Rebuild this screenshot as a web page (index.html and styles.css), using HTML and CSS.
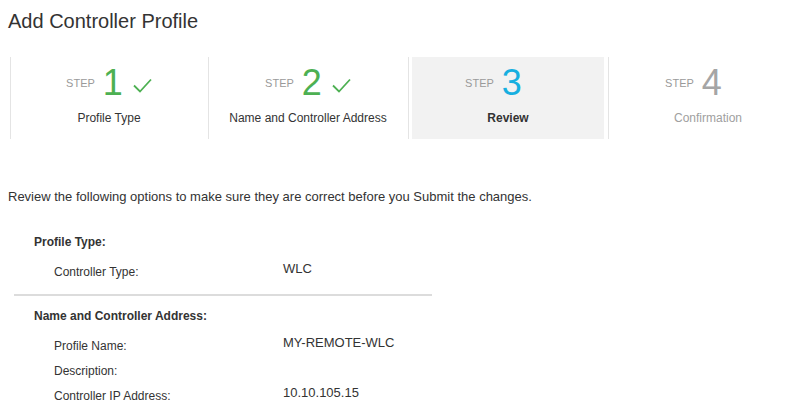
FILE: index.html
```html
<!DOCTYPE html>
<html lang="en">
<head>
  <meta charset="UTF-8">
  <meta name="viewport" content="width=device-width, initial-scale=1.0">
  <title>Add Controller Profile</title>
  <link rel="stylesheet" href="styles.css">
</head>
<body>
  <h1 class="page-title">Add Controller Profile</h1>

  <div class="steps">
    <div class="step done">
      <div class="step-inner">
        <div class="step-head">
          <span class="step-word">STEP</span>
          <span class="step-num">1</span>
          <svg class="check" width="19" height="15" viewBox="0 0 19 15"><polyline points="1,7.5 7,13.5 18,1.5" /></svg>
        </div>
        <div class="step-label">Profile Type</div>
      </div>
    </div>
    <div class="step done">
      <div class="step-inner">
        <div class="step-head">
          <span class="step-word">STEP</span>
          <span class="step-num">2</span>
          <svg class="check" width="19" height="15" viewBox="0 0 19 15"><polyline points="1,7.5 7,13.5 18,1.5" /></svg>
        </div>
        <div class="step-label">Name and Controller Address</div>
      </div>
    </div>
    <div class="step active">
      <div class="step-inner">
        <div class="step-head">
          <span class="step-word">STEP</span>
          <span class="step-num">3</span>
          <svg class="check" width="19" height="15" viewBox="0 0 19 15"><polyline points="1,7.5 7,13.5 18,1.5" /></svg>
        </div>
        <div class="step-label">Review</div>
      </div>
    </div>
    <div class="step pending">
      <div class="step-inner">
        <div class="step-head">
          <span class="step-word">STEP</span>
          <span class="step-num">4</span>
          <svg class="check" width="19" height="15" viewBox="0 0 19 15"><polyline points="1,7.5 7,13.5 18,1.5" /></svg>
        </div>
        <div class="step-label">Confirmation</div>
      </div>
    </div>
  </div>

  <p class="intro">Review the following options to make sure they are correct before you Submit the changes.</p>

  <div class="review">
    <div class="section">
      <h3 class="section-title">Profile Type:</h3>
      <div class="row">
        <span class="row-label">Controller Type:</span>
        <span class="row-value">WLC</span>
      </div>
    </div>
    <div class="section">
      <h3 class="section-title">Name and Controller Address:</h3>
      <div class="row">
        <span class="row-label">Profile Name:</span>
        <span class="row-value">MY-REMOTE-WLC</span>
      </div>
      <div class="row">
        <span class="row-label">Description:</span>
        <span class="row-value"></span>
      </div>
      <div class="row">
        <span class="row-label">Controller IP Address:</span>
        <span class="row-value">10.10.105.15</span>
      </div>
    </div>
  </div>
</body>
</html>
```

FILE: styles.css
```css
body { margin: 0; padding: 8px; font-family: "Liberation Sans", Arial, sans-serif; color: #333; background: #fff; overflow: hidden; }

.page-title { font-size: 20px; font-weight: normal; line-height: 23px; margin: 2px 0 24px; color: #333; }

/* wizard steps */
.steps { display: flex; margin-left: 2px; height: 82px; overflow: hidden; }
.step { flex: 0 0 200px; box-sizing: border-box; border-left: 1px solid #e4e4e4; padding: 0 4px 0 3px; }
.step:first-child { flex-basis: 198px; }
.step-inner { height: 100%; box-sizing: border-box; padding-top: 6px; text-align: center; }
.step.active .step-inner { background: #f2f2f2; }
.step-head { display: flex; justify-content: center; align-items: center; height: 40px; }
.step-word { font-size: 11px; line-height: 14px; color: #9a9a9a; margin-right: 8px; }
.step-num { font-size: 36px; line-height: 40px; }
.check { margin-left: 10px; margin-top: 4px; fill: none; stroke: #4db052; stroke-width: 1.8; visibility: hidden; }
.step.done .check { visibility: visible; }
.step.done .step-num { color: #4db052; }
.step.active .step-num { color: #17afe0; }
.step.pending .step-num { color: #a5a5a5; }
.step-label { font-size: 12px; line-height: 14px; margin-top: 8px; }
.step.active .step-label { font-weight: bold; }
.step.pending .step-label { color: #a0a0a0; }

/* review list */
.intro { font-size: 13px; line-height: 15px; margin: 50px 0 31px; }
.review { margin-left: 6px; width: 418px; }
.section { padding-left: 20px; }
.section:first-child { border-bottom: 2px solid #dcdcdc; padding-bottom: 14px; margin-bottom: 13px; }
.section-title { font-size: 12px; line-height: 14px; margin: 0 0 12px; font-weight: bold; }
.row { display: flex; align-items: flex-start; line-height: 16px; height: 19px; margin-bottom: 6px; }
.row:last-child { margin-bottom: 0; }
.row-label { font-size: 12px; width: 229px; padding-left: 20px; padding-top: 3px; flex-shrink: 0; }
.row-value { font-size: 13px; }
```
